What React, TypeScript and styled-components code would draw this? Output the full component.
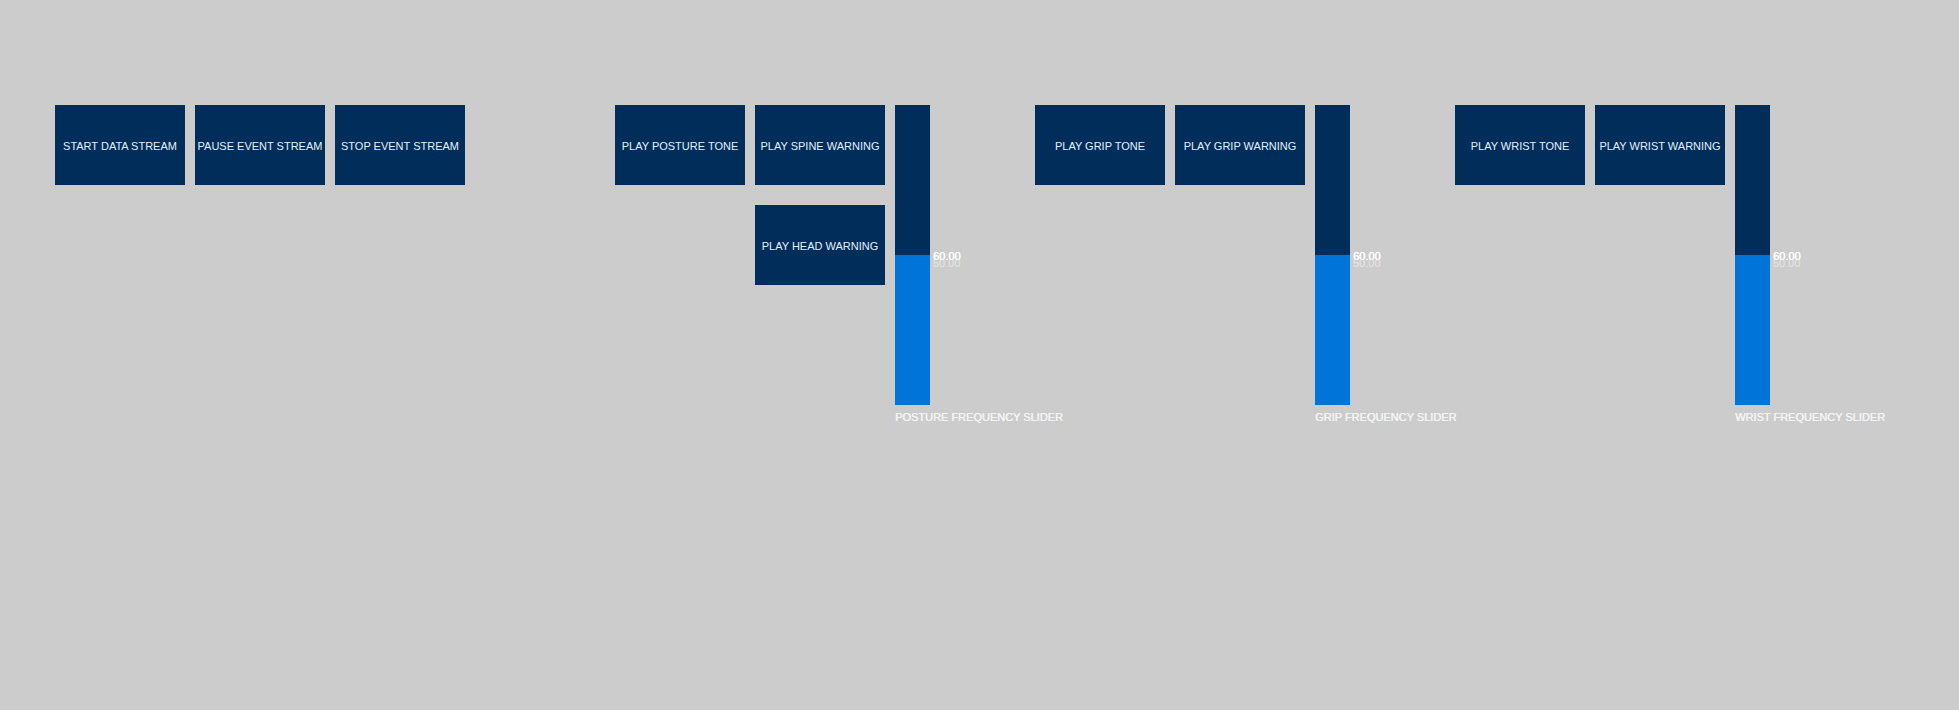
import React from "react";
import styled, { createGlobalStyle } from "styled-components";

const GlobalStyle = createGlobalStyle`
  html, body {
    margin: 0;
    padding: 0;
    background: #cccccc;
  }
  body {
    font-family: "Liberation Sans", Arial, sans-serif;
  }
`;

const Page = styled.div`
  width: 1959px;
  height: 710px;
  box-sizing: border-box;
  padding: 105px 0 0 55px;
  display: flex;
  align-items: flex-start;
  background: #cccccc;
  overflow: hidden;
`;

const Group = styled.div<{ $width: number }>`
  width: ${(p) => p.$width}px;
  flex: none;
  display: flex;
  align-items: flex-start;
  gap: 10px;
`;

const Stack = styled.div`
  display: flex;
  flex-direction: column;
  gap: 20px;
`;

const Button = styled.button`
  width: 130px;
  height: 80px;
  flex: none;
  border: 0;
  margin: 0;
  padding: 2px 0 0;
  background: #002d5a;
  color: #e4f0fb;
  font-family: "Liberation Sans", Arial, sans-serif;
  font-size: 11px;
  line-height: 13px;
  text-align: center;
  white-space: nowrap;
  cursor: pointer;
`;

const SliderBox = styled.div`
  width: 35px;
  flex: none;
  display: flex;
  flex-direction: column;
`;

const Track = styled.div`
  position: relative;
  width: 35px;
  height: 300px;
  background: #002d5a;
`;

const Fill = styled.div`
  position: absolute;
  left: 0;
  bottom: 0;
  width: 100%;
  background: #0074d9;
`;

const ValueText = styled.span<{ $ghost?: boolean }>`
  position: absolute;
  left: 38px;
  font-size: 11px;
  line-height: 13px;
  white-space: nowrap;
  color: ${(p) => (p.$ghost ? "rgba(240,240,240,0.75)" : "#ffffff")};
  text-shadow: ${(p) => (p.$ghost ? "none" : "0.4px 0 0 #ffffff")};
`;

const Caption = styled.div`
  margin-top: 6px;
  font-size: 11px;
  line-height: 13px;
  color: #f4f4f4;
  white-space: nowrap;
  text-shadow: 0.4px 0 0 #f4f4f4;
`;

type SliderProps = { label: string; value: number; shown: number; min?: number; max?: number };

function Slider({ label, value, shown, min = 0, max = 100 }: SliderProps) {
  const pct = ((value - min) / (max - min)) * 100;
  const top = 300 - (pct / 100) * 300;
  return (
    <SliderBox>
      <Track>
        <Fill style={{ height: pct + "%" }} />
        <ValueText style={{ top: top - 5 }}>{shown.toFixed(2)}</ValueText>
        <ValueText $ghost style={{ top: top + 2 }}>{value.toFixed(2)}</ValueText>
      </Track>
      <Caption>{label}</Caption>
    </SliderBox>
  );
}

export default function App() {
  return (
    <>
      <GlobalStyle />
      <Page>
        <Group $width={560}>
          <Button>START DATA STREAM</Button>
          <Button>PAUSE EVENT STREAM</Button>
          <Button>STOP EVENT STREAM</Button>
        </Group>
        <Group $width={420}>
          <Button>PLAY POSTURE TONE</Button>
          <Stack>
            <Button>PLAY SPINE WARNING</Button>
            <Button>PLAY HEAD WARNING</Button>
          </Stack>
          <Slider label="POSTURE FREQUENCY SLIDER" value={50} shown={60} />
        </Group>
        <Group $width={420}>
          <Button>PLAY GRIP TONE</Button>
          <Button>PLAY GRIP WARNING</Button>
          <Slider label="GRIP FREQUENCY SLIDER" value={50} shown={60} />
        </Group>
        <Group $width={420}>
          <Button>PLAY WRIST TONE</Button>
          <Button>PLAY WRIST WARNING</Button>
          <Slider label="WRIST FREQUENCY SLIDER" value={50} shown={60} />
        </Group>
      </Page>
    </>
  );
}
